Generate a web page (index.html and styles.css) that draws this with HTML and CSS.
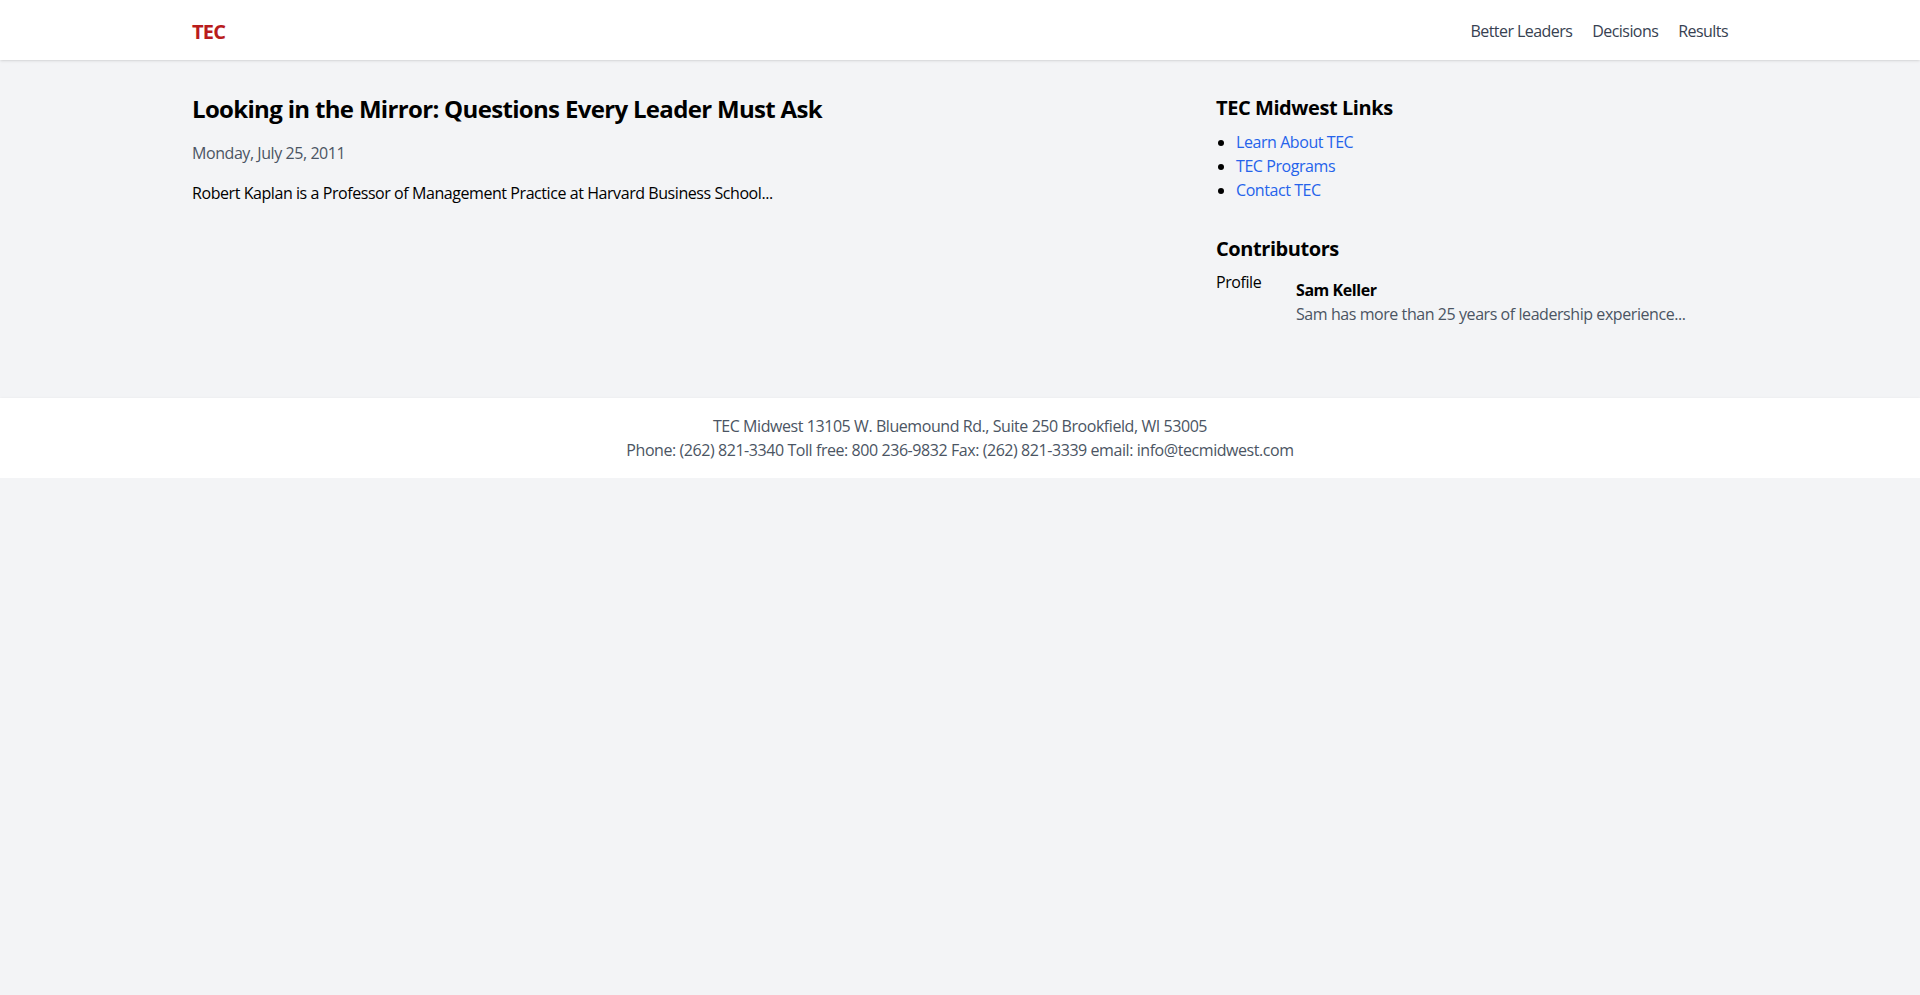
FILE: index.html
```html
<!DOCTYPE html>
<html lang="en">
<head>
<meta charset="utf-8">
<title>TEC Midwest</title>
<link rel="stylesheet" href="styles.css">
</head>
<body>
<header class="site-header">
  <div class="container header-inner">
    <a class="logo" href="#">TEC</a>
    <nav class="nav">
      <a href="#">Better Leaders</a>
      <a href="#">Decisions</a>
      <a href="#">Results</a>
    </nav>
  </div>
</header>

<main class="container main-grid">
  <article class="post">
    <h1 class="post-title">Looking in the Mirror: Questions Every Leader Must Ask</h1>
    <p class="post-date">Monday, July 25, 2011</p>
    <p class="post-excerpt">Robert Kaplan is a Professor of Management Practice at Harvard Business School...</p>
  </article>

  <aside class="sidebar">
    <section class="side-section">
      <h2 class="side-title">TEC Midwest Links</h2>
      <ul class="link-list">
        <li><a href="#">Learn About TEC</a></li>
        <li><a href="#">TEC Programs</a></li>
        <li><a href="#">Contact TEC</a></li>
      </ul>
    </section>
    <section class="side-section">
      <h2 class="side-title contributors-title">Contributors</h2>
      <div class="contributor">
        <div class="avatar">Profile</div>
        <div class="contributor-info">
          <p class="contributor-name">Sam Keller</p>
          <p class="contributor-bio">Sam has more than 25 years of leadership experience...</p>
        </div>
      </div>
    </section>
  </aside>
</main>

<footer class="site-footer">
  <p>TEC Midwest 13105 W. Bluemound Rd., Suite 250 Brookfield, WI 53005</p>
  <p>Phone: (262) 821-3340 Toll free: 800 236-9832 Fax: (262) 821-3339 email: info@tecmidwest.com</p>
</footer>
</body>
</html>
```
FILE: styles.css
```css
* { box-sizing: border-box; }

html, body { margin: 0; padding: 0; }

body {
  background: #f3f4f6;
  color: #000;
  font-family: "Open Sans", "Noto Sans", sans-serif;
  font-size: 16px;
  line-height: 24px;
  letter-spacing: -0.027em;
}

p, h1, h2, ul { margin: 0; }

a { text-decoration: none; }

.container {
  width: 1536px;
  margin: 0 auto;
}

/* Header */
.site-header {
  background: #fff;
  box-shadow: 0 1px 3px 0 rgba(0,0,0,0.1), 0 1px 2px -1px rgba(0,0,0,0.1);
}

.header-inner {
  height: 60px;
  padding-top: 2px;
  display: flex;
  align-items: center;
  justify-content: space-between;
}

.logo {
  color: #b91c1c;
  font-weight: 700;
  font-size: 20px;
  line-height: 28px;
  padding-top: 2px;
  letter-spacing: -0.04em;
}

.nav {
  display: flex;
  gap: 20px;
}

.nav a {
  color: #374151;
  font-size: 16px;
  line-height: 24px;
  letter-spacing: -0.035em;
}

/* Main */
.main-grid {
  display: grid;
  grid-template-columns: 2fr 1fr;
  padding-top: 33px;
  padding-bottom: 32px;
}

.post-title {
  font-size: 24px;
  line-height: 32px;
  font-weight: 700;
  letter-spacing: -0.028em;
  margin-bottom: 16px;
}

.post-date {
  color: #4b5563;
  margin-bottom: 16px;
}

/* Sidebar */
.sidebar {
  margin-top: 1px;
}

.side-title {
  font-size: 20px;
  line-height: 28px;
  font-weight: 700;
  margin-bottom: 8px;
}

.contributors-title {
  margin-bottom: 7px;
}

.link-list {
  padding-left: 20px;
  list-style: disc;
  margin-bottom: 33px;
}

.link-list a {
  color: #2563eb;
}

.contributor {
  display: flex;
  align-items: center;
  gap: 16px;
}

.avatar {
  width: 64px;
  height: 64px;
  flex-shrink: 0;
}

.contributor-name {
  font-weight: 700;
}

.contributor-bio {
  color: #4b5563;
}

/* Footer */
.site-footer {
  margin-top: 32px;
  background: #fff;
  padding: 16px 0;
  text-align: center;
  color: #4b5563;
  box-shadow: 0 1px 3px 0 rgba(0,0,0,0.1), 0 1px 2px -1px rgba(0,0,0,0.1);
}
```
